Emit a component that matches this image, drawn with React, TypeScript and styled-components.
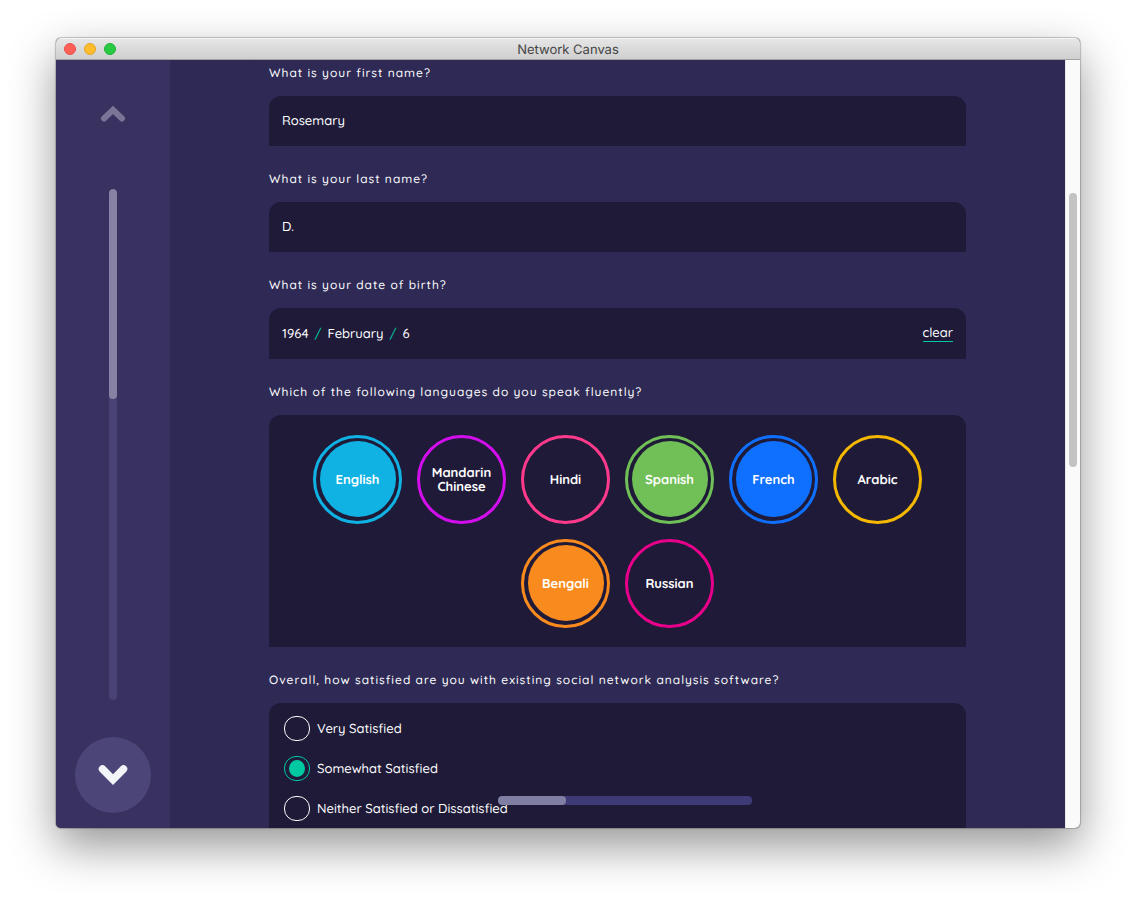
import React, { useState } from "react";
import styled, { createGlobalStyle } from "styled-components";

const GlobalStyle = createGlobalStyle`
  *, *::before, *::after { box-sizing: border-box; }
  body {
    margin: 0;
    background: #fff;
    color: #fff;
    font-family: Quicksand, Lato, "Open Sans", sans-serif;
    font-size: 13px;
    font-weight: 500;
    line-height: 20px;
    text-rendering: geometricPrecision;
  }
  button, input { font: inherit; color: inherit; text-rendering: inherit; }
`;

const Desktop = styled.div`
  height: 100vh;
  min-height: 480px;
  padding: 38px 56px 74px;
`;

const AppWindow = styled.div`
  display: flex;
  flex-direction: column;
  height: 100%;
  border-radius: 5px;
  overflow: hidden;
  background: #2e2a55;
  box-shadow: 0 0 1px 1px rgba(0, 0, 0, 0.22), 0 18px 46px rgba(0, 0, 0, 0.42);
`;

const TitleBar = styled.header`
  flex: none;
  display: grid;
  grid-template-columns: 1fr auto 1fr;
  align-items: center;
  height: 22px;
  padding: 0 8px;
  background: linear-gradient(#e6e6e6, #cfcfcf);
  border-top: 1px solid #f4f4f4;
  border-bottom: 1px solid #a2a2a2;
`;

const Lights = styled.div`
  display: flex;
  gap: 8px;
`;

const Light = styled.button<{ $fill: string; $edge: string }>`
  width: 12px;
  height: 12px;
  padding: 0;
  border: 1px solid ${(p) => p.$edge};
  border-radius: 50%;
  background: ${(p) => p.$fill};
`;

const Title = styled.h1`
  margin: 0;
  padding-top: 2px;
  color: #454545;
  font-family: Inter, sans-serif;
  font-size: 13px;
  font-weight: 400;
  line-height: 18px;
`;

const Body = styled.div`
  flex: 1;
  display: flex;
  min-height: 0;
`;

const Sidebar = styled.nav`
  flex: none;
  display: flex;
  flex-direction: column;
  align-items: center;
  gap: 37px;
  width: 114px;
  padding: 16px 0 15px;
  background: #39315f;
`;

const NavButton = styled.button<{ $active?: boolean }>`
  flex: none;
  display: flex;
  align-items: center;
  justify-content: center;
  width: 76px;
  height: 76px;
  padding: 0;
  border: 0;
  border-radius: 50%;
  color: ${(p) => (p.$active ? "#f2f6f8" : "#7a7496")};
  background: ${(p) => (p.$active ? "#4c4678" : "transparent")};
`;

const Track = styled.div`
  flex: 1;
  width: 8px;
  border-radius: 4px;
  background: #494274;
  overflow: hidden;
`;

const TrackFill = styled.div`
  height: 41%;
  border-radius: 4px;
  background: #8782a4;
`;

const Stage = styled.div`
  position: relative;
  flex: 1;
  display: flex;
  min-width: 0;
`;

const Form = styled.form`
  flex: 1;
  min-width: 0;
  padding: 2px 99px 0;
  overflow: hidden;
`;

const Field = styled.fieldset`
  min-width: 0;
  margin: 0 0 22px;
  padding: 0;
  border: 0;
`;

const questionText = `
  display: block;
  margin: 0 0 12px;
  padding: 0;
  font-size: 12px;
  line-height: 22px;
  letter-spacing: 1px;
`;

const Question = styled.label`
  ${questionText}
`;

const Legend = styled.legend`
  ${questionText}
`;

const panel = `
  background: #1e1a38;
  border-radius: 12px 12px 0 0;
`;

const TextBox = styled.input`
  ${panel}
  display: block;
  width: 100%;
  height: 50px;
  padding: 0 13px;
  border: 0;
  outline: 0;
`;

const DateBox = styled.div`
  ${panel}
  display: flex;
  align-items: center;
  gap: 6px;
  height: 51px;
  padding: 0 13px;
`;

const DatePart = styled.button`
  padding: 0;
  border: 0;
  background: none;
`;

const Slash = styled.span`
  color: #00c9a2;
`;

const Clear = styled.button`
  margin-left: auto;
  padding: 0;
  border: 0;
  border-bottom: 1px solid #00c9a2;
  background: none;
  line-height: 15px;
`;

const Choices = styled.div`
  ${panel}
  display: flex;
  flex-wrap: wrap;
  justify-content: center;
  gap: 15px;
  padding: 20px 20px 19px;
`;

const Bubble = styled.label<{ $color: string }>`
  display: flex;
  align-items: flex-start;
  justify-content: center;
  width: 89px;
  height: 89px;
  padding-top: 3px;
  border: 3px solid ${(p) => p.$color};
  border-radius: 50%;
`;

const HiddenCheck = styled.input`
  position: absolute;
  width: 1px;
  height: 1px;
  margin: 0;
  opacity: 0;
`;

const Disc = styled.span<{ $fill: string }>`
  display: flex;
  align-items: center;
  justify-content: center;
  width: 76px;
  height: 76px;
  padding-top: 2px;
  border-radius: 50%;
  background: ${(p) => p.$fill};
  font-size: 13px;
  font-weight: 700;
  line-height: 14px;
  text-align: center;
`;

const Options = styled.div`
  ${panel}
  padding: 5px 15px;
`;

const Option = styled.label`
  display: flex;
  align-items: center;
  gap: 7px;
  height: 40px;
`;

const Radio = styled.input`
  appearance: none;
  display: flex;
  align-items: center;
  justify-content: center;
  width: 26px;
  height: 25px;
  margin: 0;
  border: 1px solid #fff;
  border-radius: 12px;

  &:checked { border-color: #00c9a2; }
  &:checked::before {
    content: "";
    width: 16px;
    height: 17px;
    border-radius: 50%;
    background: #00c9a2;
  }
`;

const OptionText = styled.span`
  padding-top: 2px;
`;

const ScrollGutter = styled.div`
  flex: none;
  width: 15px;
  padding: 133px 3px 0;
  border-left: 1px solid #e8e8ea;
  background: #fafafa;
`;

const ScrollThumb = styled.div`
  width: 8px;
  height: 274px;
  border-radius: 4px;
  background: #c3c3c3;
`;

const Progress = styled.div`
  position: absolute;
  left: 36%;
  right: 36%;
  bottom: 23px;
  height: 9px;
  border-radius: 4px;
  background: #3d3a76;
  overflow: hidden;
`;

const ProgressFill = styled.div`
  width: 27%;
  height: 100%;
  border-radius: 4px;
  background: #807ea3;
`;

const languages = [
  { name: "English", color: "#10b2e4", picked: true },
  { name: "Mandarin Chinese", color: "#d30eed", picked: false },
  { name: "Hindi", color: "#ff3a8c", picked: false },
  { name: "Spanish", color: "#70c057", picked: true },
  { name: "French", color: "#0f70ff", picked: true },
  { name: "Arabic", color: "#f5b800", picked: false },
  { name: "Bengali", color: "#f98b1e", picked: true },
  { name: "Russian", color: "#e8008b", picked: false },
];

const ratings = ["Very Satisfied", "Somewhat Satisfied", "Neither Satisfied or Dissatisfied"];

export default function App() {
  const [picked, setPicked] = useState(languages.map((l) => l.picked));
  const [rating, setRating] = useState(ratings[1]);
  const toggle = (index: number) =>
    setPicked((all) => all.map((on, i) => (i === index ? !on : on)));

  return (
    <Desktop>
      <GlobalStyle />
      <AppWindow>
        <TitleBar>
          <Lights>
            <Light $fill="#ff5f57" $edge="#e8504a" aria-label="Close" />
            <Light $fill="#ffbd2e" $edge="#e3a32a" aria-label="Minimize" />
            <Light $fill="#28ca42" $edge="#20b035" aria-label="Zoom" />
          </Lights>
          <Title>Network Canvas</Title>
        </TitleBar>
        <Body>
          <Sidebar>
            <NavButton aria-label="Back">
              <svg width="30" height="24" viewBox="0 0 30 24" fill="none" stroke="currentColor" strokeWidth="6" strokeLinecap="round">
                <path d="M6 16.5 15 7.8 24 16.5" />
              </svg>
            </NavButton>
            <Track>
              <TrackFill />
            </Track>
            <NavButton $active aria-label="Next">
              <svg width="34" height="26" viewBox="0 0 34 26" fill="none" stroke="currentColor" strokeWidth="7.5" strokeLinecap="round">
                <path d="M6.5 7 17 17.6 27.5 7" />
              </svg>
            </NavButton>
          </Sidebar>
          <Stage>
            <Form>
              <Field>
                <Question htmlFor="first">What is your first name?</Question>
                <TextBox id="first" defaultValue="Rosemary" />
              </Field>
              <Field>
                <Question htmlFor="last">What is your last name?</Question>
                <TextBox id="last" defaultValue="D." />
              </Field>
              <Field>
                <Legend>What is your date of birth?</Legend>
                <DateBox>
                  <DatePart type="button">1964</DatePart>
                  <Slash>/</Slash>
                  <DatePart type="button">February</DatePart>
                  <Slash>/</Slash>
                  <DatePart type="button">6</DatePart>
                  <Clear type="button">clear</Clear>
                </DateBox>
              </Field>
              <Field>
                <Legend>Which of the following languages do you speak fluently?</Legend>
                <Choices>
                  {languages.map((l, i) => (
                    <Bubble key={l.name} $color={l.color}>
                      <HiddenCheck type="checkbox" checked={picked[i]} onChange={() => toggle(i)} />
                      <Disc $fill={picked[i] ? l.color : "transparent"}>{l.name}</Disc>
                    </Bubble>
                  ))}
                </Choices>
              </Field>
              <Field>
                <Legend>Overall, how satisfied are you with existing social network analysis software?</Legend>
                <Options>
                  {ratings.map((r) => (
                    <Option key={r}>
                      <Radio type="radio" name="rating" checked={rating === r} onChange={() => setRating(r)} />
                      <OptionText>{r}</OptionText>
                    </Option>
                  ))}
                </Options>
              </Field>
            </Form>
            <ScrollGutter>
              <ScrollThumb />
            </ScrollGutter>
            <Progress role="progressbar" aria-label="Interview progress" aria-valuenow={27}>
              <ProgressFill />
            </Progress>
          </Stage>
        </Body>
      </AppWindow>
    </Desktop>
  );
}
